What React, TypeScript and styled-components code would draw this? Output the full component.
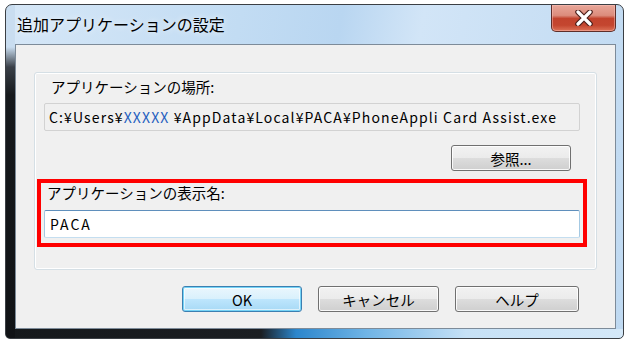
import React from "react";
import styled, { createGlobalStyle } from "styled-components";

const Global = createGlobalStyle`
  html, body { margin: 0; padding: 0; background: #ffffff; }
  body { font-family: "Noto Sans CJK JP", "Noto Sans", sans-serif; }
`;

const Window = styled.div`
  box-sizing: border-box;
  margin: 4px 0 0 5px;
  width: 619px;
  height: 335px;
  border: 1px solid #3b3f44;
  border-radius: 7px 7px 5px 5px;
  padding: 0 7px 9px 9px;
  display: flex;
  flex-direction: column;
  background:
    linear-gradient(to bottom, #c9ddf0 0, #c9ddf0 42px, #3a4048 62px, #16191c 90px, #111316 100%) left top / 9px 100% no-repeat,
    linear-gradient(to right, #15181b 0, #1b1e22 255px, #2c86cc 290px, #6fb4e6 360px, #c6e1f6 460px, #d4e8f8 100%) left bottom / 100% 9px no-repeat,
    linear-gradient(100deg, #d6e7f7 0%, #c2dcf3 35%, #b9d6f1 50%, #d2e5f7 62%, #bfd9f1 100%);
`;

const TitleBar = styled.div`
  height: 39px;
  display: flex;
  justify-content: space-between;
  align-items: flex-start;
`;

const TitleText = styled.div`
  padding: 8px 0 0 2px;
  font-size: 16px;
  line-height: 22px;
  color: #000;
  text-shadow: 0 0 6px rgba(255, 255, 255, 0.9);
`;

const CloseButton = styled.div`
  box-sizing: border-box;
  width: 65px;
  height: 27px;
  border: 1px solid #5e2e29;
  border-top: none;
  border-radius: 0 0 5px 5px;
  display: flex;
  align-items: center;
  justify-content: center;
  background: linear-gradient(
    to bottom,
    #e8a699 0%,
    #dc8c7c 40%,
    #c2432d 52%,
    #c4462f 78%,
    #dc7157 100%
  );
  box-shadow: inset 0 0 0 1px rgba(255, 200, 190, 0.45);
`;

const Client = styled.div`
  flex: 1;
  box-sizing: border-box;
  background: #f0f0f0;
  border: 1px solid #7d8b99;
  padding: 27px 18px 14px 18px;
  display: flex;
  flex-direction: column;
`;

const GroupBox = styled.div`
  box-sizing: border-box;
  height: 198px;
  border: 1px solid #d5dfe5;
  border-radius: 3px;
  box-shadow: inset 0 0 0 1px #ffffff;
  padding: 4px 16px 0 9px;
  display: flex;
  flex-direction: column;
`;

const Label = styled.div<{ $indent?: number }>`
  font-size: 14.5px;
  line-height: 20px;
  color: #000;
  padding-left: ${(p) => p.$indent ?? 3}px;
  white-space: nowrap;
`;

const PathBox = styled.div`
  box-sizing: border-box;
  margin-top: 6px;
  height: 28px;
  border: 1px solid #d2d2d2;
  border-radius: 2px;
  background: #f0f0f0;
  padding: 0 4px;
  display: flex;
  align-items: center;
  font-size: 14px;
  letter-spacing: 1.12px;
  color: #000;
  white-space: nowrap;
  overflow: hidden;
`;

const Masked = styled.span`
  color: #1f5fbf;
`;

const BrowseRow = styled.div`
  display: flex;
  justify-content: flex-end;
  margin-top: 14px;
  padding-right: 9px;
`;

const Button = styled.div<{ $primary?: boolean; $w?: number }>`
  box-sizing: border-box;
  width: ${(p) => p.$w ?? 120}px;
  height: 26px;
  border-radius: 3px;
  border: 1px solid ${(p) => (p.$primary ? "#3c7fb1" : "#707070")};
  display: flex;
  align-items: center;
  justify-content: center;
  font-size: 14.5px;
  color: #000;
  background: ${(p) =>
    p.$primary
      ? "linear-gradient(to bottom, #eaf6fd 0%, #d9f0fc 50%, #bee6fd 50%, #a7d9f5 100%)"
      : "linear-gradient(to bottom, #f2f2f2 0%, #ebebeb 50%, #dddddd 50%, #cfcfcf 100%)"};
  box-shadow: ${(p) =>
    p.$primary
      ? "inset 0 0 0 1px #74d3f6, inset 0 0 0 2px rgba(255,255,255,0.6)"
      : "inset 0 0 0 1px rgba(255,255,255,0.85)"};
`;

const Highlight = styled.div`
  box-sizing: border-box;
  margin: 8px -7px 0 -7px;
  border: 4px solid #ff0000;
  padding: 0 3px 5px 3px;
  display: flex;
  flex-direction: column;
`;

const NameInput = styled.div`
  box-sizing: border-box;
  margin-top: 7px;
  height: 28px;
  background: #ffffff;
  border: 1px solid #a4c9e3;
  border-top-color: #5f8fbc;
  border-bottom-color: #c4def0;
  border-radius: 2px;
  padding: 0 5px;
  display: flex;
  align-items: center;
  font-size: 14px;
  letter-spacing: 2px;
  color: #000;
`;

const ButtonRow = styled.div`
  display: flex;
  justify-content: flex-end;
  gap: 16px;
  margin-top: 16px;
  padding-right: 18px;
`;

function CloseGlyph() {
  return (
    <svg width="18" height="16" viewBox="0 0 18 16">
      <path
        d="M3 2 L15 14 M15 2 L3 14"
        stroke="#4a1d18"
        strokeWidth="5.5"
        strokeLinecap="round"
      />
      <path
        d="M3 2 L15 14 M15 2 L3 14"
        stroke="#ffffff"
        strokeWidth="3.2"
        strokeLinecap="round"
      />
    </svg>
  );
}

export default function App() {
  return (
    <>
      <Global />
      <Window>
        <TitleBar>
          <TitleText>追加アプリケーションの設定</TitleText>
          <CloseButton>
            <CloseGlyph />
          </CloseButton>
        </TitleBar>
        <Client>
          <GroupBox>
            <Label $indent={7}>アプリケーションの場所:</Label>
            <PathBox>
              C:¥Users¥<Masked>XXXXX</Masked>&nbsp;¥AppData¥Local¥PACA¥PhoneAppli Card Assist.exe
            </PathBox>
            <BrowseRow>
              <Button>参照...</Button>
            </BrowseRow>
            <Highlight>
              <Label>アプリケーションの表示名:</Label>
              <NameInput>PACA</NameInput>
            </Highlight>
          </GroupBox>
          <ButtonRow>
            <Button $primary>OK</Button>
            <Button $w={121}>キャンセル</Button>
            <Button $w={124}>ヘルプ</Button>
          </ButtonRow>
        </Client>
      </Window>
    </>
  );
}
